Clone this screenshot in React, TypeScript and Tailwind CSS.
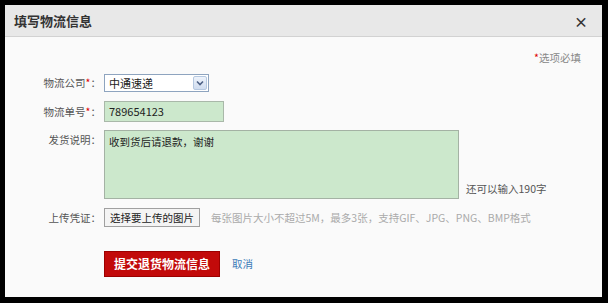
const font = { fontFamily: '"Noto Sans CJK SC", "Liberation Sans", sans-serif' };

const Label = ({ text, required }: { text: string; required?: boolean }) => (
  <div className="w-[97px] shrink-0 pr-[1px] text-right text-[10.5px] leading-[18px] text-[#555]">
    {text}
    {required && <span className="text-[#d00]">*</span>}
    <span>：</span>
  </div>
);

export default function App() {
  return (
    <div className="w-[608px] h-[303px] bg-black pt-[5px] pl-[5px] pr-[6px] pb-[6px]" style={font}>
      <div className="w-full h-full flex flex-col bg-[#fafafa]">
        <div className="h-[32px] shrink-0 flex items-center justify-between px-[9px] bg-[#e8e8e8] border-b border-[#d2d2d2]">
          <h2 className="text-[13px] font-bold text-[#333]">填写物流信息</h2>
          <span className="mr-[5px] text-[14px] font-bold text-[#333] leading-none">×</span>
        </div>
        <div className="flex flex-col pt-[13px]">
          <div className="h-[16px] pr-[21px] text-right text-[10.5px] leading-[16px] text-[#888]">
            <span className="text-[#d00]">*</span>选项必填
          </div>

          <div className="mt-[8px] flex items-center">
            <Label text="物流公司" required />
            <div className="ml-[2px] w-[105px] h-[18px] flex items-center justify-between border border-[#8ea4bf] bg-white pl-[4px] pr-[1px]">
              <span className="text-[11px] text-[#222]">中通速递</span>
              <div className="w-[14px] h-[14px] flex items-center justify-center rounded-[2px] border border-[#b5c8e0] bg-gradient-to-b from-[#eef3fb] to-[#cfdcef]">
                <svg width="8" height="6" viewBox="0 0 8 6">
                  <path d="M1 1.5 L4 4.5 L7 1.5" stroke="#4d6185" strokeWidth="1.6" fill="none" />
                </svg>
              </div>
            </div>
          </div>

          <div className="mt-[9px] flex items-center">
            <Label text="物流单号" required />
            <div className="ml-[2px] w-[120px] h-[21px] flex items-center border border-[#a9b8a9] bg-[#cce8cc] px-[4px] text-[11px] text-[#222]">
              789654123
            </div>
          </div>

          <div className="mt-[8px] flex items-start">
            <div className="pt-[1px]">
              <Label text="发货说明" />
            </div>
            <div className="ml-[2px] w-[355px] h-[69px] border border-[#a4b2a4] bg-[#cce8cc] px-[4px] py-[2px] text-[10.5px] leading-[18px] text-[#222]">
              收到货后请退款，谢谢
            </div>
            <div className="self-end ml-[7px] mb-[2px] text-[10.5px] leading-[16px] text-[#555]">还可以输入190字</div>
          </div>

          <div className="mt-[9px] flex items-center">
            <Label text="上传凭证" />
            <div className="ml-[2px] h-[19px] px-[5px] flex items-center border border-[#a0a0a0] bg-[#f4f4f4] text-[10.5px] text-[#222]">
              选择要上传的图片
            </div>
            <div className="ml-[11px] text-[10.5px] text-[#aaa]">每张图片大小不超过5M，最多3张，支持GIF、JPG、PNG、BMP格式</div>
          </div>

          <div className="mt-[24px] flex items-center pl-[99px]">
            <div className="w-[116px] h-[26px] flex items-center justify-center bg-[#c20a0a] border border-[#9c0000] text-[12px] font-bold text-white">
              提交退货物流信息
            </div>
            <span className="ml-[12px] text-[10.5px] text-[#3a7ab8]">取消</span>
          </div>
        </div>
      </div>
    </div>
  );
}
